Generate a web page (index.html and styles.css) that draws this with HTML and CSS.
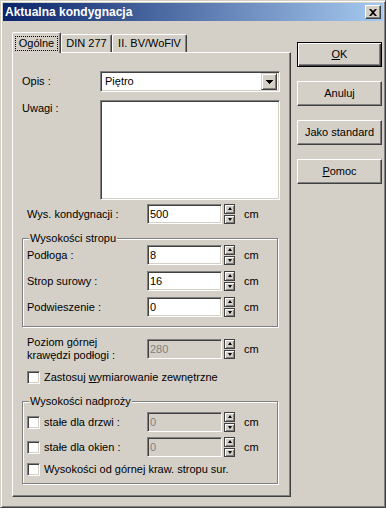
FILE: index.html
```html
<!DOCTYPE html>
<html lang="pl">
<head>
<meta charset="utf-8">
<title>Aktualna kondygnacja</title>
<link rel="stylesheet" href="styles.css">
</head>
<body>
<div class="window">
  <div class="titlebar">
    <span class="title">Aktualna kondygnacja</span>
    <div class="close">
      <svg width="8" height="7" viewBox="0 0 8 7"><path d="M0 0h2l2 2 2-2h2L5 3.5 8 7H6L4 5 2 7H0l3-3.5z" fill="#000"/></svg>
    </div>
  </div>
  <div class="body">
    <div class="left">
      <div class="tabs">
        <div class="tab active"><span class="focus">Ogólne</span></div>
        <div class="tab w-din">DIN 277</div>
        <div class="tab w-bv">II. BV/WoFlV</div>
      </div>
      <div class="panel">
        <div class="row r-opis">
          <span class="lbl-a">Opis :</span>
          <div class="combo">
            <span class="combo-text">Piętro</span>
            <span class="combo-btn">
              <svg width="7" height="4" viewBox="0 0 7 4" shape-rendering="crispEdges"><path d="M0 0h7v1H0zM1 1h5v1H1zM2 2h3v1H2zM3 3h1v1H3z" fill="#000"/></svg>
            </span>
          </div>
        </div>
        <div class="row r-uwagi">
          <span class="lbl-a lbl-top">Uwagi :</span>
          <div class="memo"></div>
        </div>
        <div class="row r-field r-wys">
          <span class="lbl-b">Wys. kondygnacji :</span>
          <div class="edit">500</div>
          <div class="spin"><i class="up"></i><i class="down"></i></div>
          <span class="unit">cm</span>
        </div>

        <div class="group g1">
          <span class="g-title">Wysokości stropu</span>
          <div class="row r-field">
            <span class="lbl-b">Podłoga :</span>
            <div class="edit">8</div>
            <div class="spin"><i class="up"></i><i class="down"></i></div>
            <span class="unit">cm</span>
          </div>
          <div class="row r-field">
            <span class="lbl-b">Strop surowy :</span>
            <div class="edit">16</div>
            <div class="spin"><i class="up"></i><i class="down"></i></div>
            <span class="unit">cm</span>
          </div>
          <div class="row r-field">
            <span class="lbl-b">Podwieszenie :</span>
            <div class="edit">0</div>
            <div class="spin"><i class="up"></i><i class="down"></i></div>
            <span class="unit">cm</span>
          </div>
        </div>

        <div class="row r-poziom">
          <span class="lbl-b">Poziom górnej<br>krawędzi podłogi :</span>
          <div class="edit disabled">280</div>
          <div class="spin"><i class="up"></i><i class="down"></i></div>
          <span class="unit">cm</span>
        </div>

        <div class="row r-check r-zast">
          <span class="check"></span>
          <span class="check-lbl">Zastosuj <u>w</u>ymiarowanie zewnętrzne</span>
        </div>

        <div class="group g2">
          <span class="g-title">Wysokości nadproży</span>
          <div class="row r-field">
            <span class="lbl-b cb-wrap"><span class="check"></span><span class="check-lbl">stałe dla drzwi :</span></span>
            <div class="edit disabled">0</div>
            <div class="spin"><i class="up"></i><i class="down"></i></div>
            <span class="unit">cm</span>
          </div>
          <div class="row r-field">
            <span class="lbl-b cb-wrap"><span class="check"></span><span class="check-lbl">stałe dla okien :</span></span>
            <div class="edit disabled">0</div>
            <div class="spin"><i class="up"></i><i class="down"></i></div>
            <span class="unit">cm</span>
          </div>
          <div class="row r-field r-last">
            <span class="check"></span><span class="check-lbl">Wysokości od górnej kraw. stropu sur.</span>
          </div>
        </div>
      </div>
    </div>
    <div class="right">
      <div class="btn default"><span><u>O</u>K</span></div>
      <div class="btn">Anuluj</div>
      <div class="btn">Jako standard</div>
      <div class="btn"><span><u>P</u>omoc</span></div>
    </div>
  </div>
</div>
</body>
</html>
```

FILE: styles.css
```css
* { box-sizing: border-box; margin: 0; padding: 0; }
html, body { width: 386px; height: 508px; overflow: hidden; background: #d4d0c8; }
body {
  font-family: "Liberation Sans", Arial, sans-serif;
  font-size: 11px;
  line-height: 13px;
  color: #000;
}
u { text-decoration: underline; text-underline-offset: 1px; }

.window {
  width: 386px;
  height: 508px;
  border: 1px solid;
  border-color: #d4d0c8 #404040 #404040 #d4d0c8;
  box-shadow: inset 1px 1px 0 #fff, inset -1px -1px 0 #808080;
  padding: 2px;
  display: flex;
  flex-direction: column;
  background: #d4d0c8;
}

.titlebar {
  flex: none;
  height: 18px;
  background: linear-gradient(to right, #0a246a, #a6caf0);
  display: flex;
  align-items: center;
  justify-content: space-between;
  padding: 0 2px 0 2px;
}
.title { color: #fff; font-weight: bold; font-size: 12px; line-height: 14px; }
.close {
  width: 16px;
  height: 14px;
  background: #d4d0c8;
  border: 1px solid;
  border-color: #fff #404040 #404040 #fff;
  box-shadow: inset -1px -1px 0 #808080;
  display: flex;
  align-items: center;
  justify-content: center;
}
.close svg { display: block; }

.body { flex: 1; display: flex; }
.left { padding: 11px 0 0 9px; display: flex; flex-direction: column; }

.tabs { display: flex; align-items: flex-end; height: 20px; }
.tab {
  height: 18px;
  border: 1px solid;
  border-bottom: none;
  border-color: #fff #404040 transparent #fff;
  box-shadow: inset -1px 0 0 #808080;
  border-radius: 2px 2px 0 0;
  display: flex;
  align-items: center;
  justify-content: center;
  background: #d4d0c8;
}
.tab.active {
  width: 49px;
  height: 21px;
  margin-bottom: -1px;
  position: relative;
  z-index: 1;
  align-items: flex-start;
  padding-top: 3px;
}
.w-din { width: 51px; }
.w-bv { width: 75px; }
.focus { border: 1px dotted #000; padding: 0 3px; line-height: 13px; }

.panel {
  width: 279px;
  height: 445px;
  border: 1px solid;
  border-color: #fff #404040 #404040 #fff;
  box-shadow: inset -1px -1px 0 #808080;
  padding-left: 9px;
  display: flex;
  flex-direction: column;
}

.row { display: flex; align-items: center; }
.r-opis { margin-top: 18px; height: 21px; }
.r-uwagi { margin-top: 8px; align-items: flex-start; }
.lbl-a { width: 78px; }
.lbl-top { padding-top: 2px; }

.combo, .memo, .edit, .check {
  border: 1px solid;
  border-color: #808080 #fff #fff #808080;
  box-shadow: inset 1px 1px 0 #404040, inset -1px -1px 0 #d4d0c8;
  background: #fff;
}
.combo {
  width: 180px;
  height: 21px;
  display: flex;
  align-items: center;
  justify-content: space-between;
  padding: 2px;
}
.combo-text { padding-left: 2px; }
.combo-btn {
  width: 16px;
  height: 17px;
  background: #d4d0c8;
  border: 1px solid;
  border-color: #d4d0c8 #404040 #404040 #d4d0c8;
  box-shadow: inset 1px 1px 0 #fff, inset -1px -1px 0 #808080;
  display: flex;
  align-items: center;
  justify-content: center;
}
.combo-btn svg { display: block; }
.memo { width: 180px; height: 100px; }

.r-field { height: 20px; }
.r-wys { margin-top: 4px; padding-left: 5px; }
.lbl-b { width: 120px; }

.edit {
  width: 75px;
  height: 20px;
  padding: 2px 0 0 2px;
  line-height: 14px;
}
.edit.disabled { background: #d4d0c8; color: #808080; }

.spin {
  width: 11px;
  height: 20px;
  margin-left: 2px;
  display: flex;
  flex-direction: column;
  gap: 1px;
}
.spin i {
  flex: 1;
  border: 1px solid #404040;
  box-shadow: inset 1px 1px 0 #fff, inset -1px -1px 0 #808080;
  background: #d4d0c8;
  display: flex;
  align-items: center;
  justify-content: center;
}
.spin i::before {
  content: "";
  width: 0;
  height: 0;
  border-left: 2px solid transparent;
  border-right: 2px solid transparent;
}
.spin .up::before { border-bottom: 3px solid #000; }
.spin .down::before { border-top: 3px solid #000; }
.unit { margin-left: 9px; }

.group {
  width: 256px;
  border: 1px solid #808080;
  box-shadow: inset 1px 1px 0 #fff, 1px 1px 0 #fff;
  position: relative;
  display: flex;
  flex-direction: column;
  padding-left: 4px;
}
.g-title {
  position: absolute;
  top: -7px;
  left: 6px;
  background: #d4d0c8;
  padding: 0 1px;
  line-height: 13px;
}
.g1 { margin-top: 14px; height: 89px; padding-top: 6px; gap: 6px; }
.g2 { margin-top: 17px; height: 83px; padding-top: 10px; gap: 5px; }
.g2 .r-last { margin-top: -3px; }

.r-poziom { margin-top: 9px; height: 26px; padding-left: 5px; }
.r-check { height: 13px; }
.r-zast { margin-top: 9px; padding-left: 5px; }
.check { width: 13px; height: 13px; flex: none; }
.check-lbl { margin-left: 4px; }
.cb-wrap { display: flex; align-items: center; }

.right { margin-left: 6px; padding-top: 21px; display: flex; flex-direction: column; gap: 14px; }
.btn {
  width: 85px;
  height: 25px;
  border: 1px solid;
  border-color: #fff #404040 #404040 #fff;
  box-shadow: inset -1px -1px 0 #808080;
  display: flex;
  align-items: center;
  justify-content: center;
  background: #d4d0c8;
}
.btn.default {
  border: 1px solid #000;
  box-shadow: inset 1px 1px 0 #fff, inset -1px -1px 0 #404040, inset -2px -2px 0 #808080;
}
```
